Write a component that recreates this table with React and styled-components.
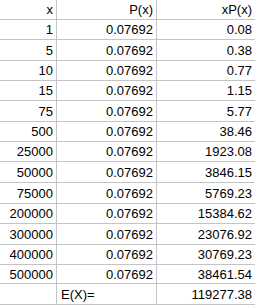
import React from "react";
import styled, { createGlobalStyle } from "styled-components";

const GlobalStyle = createGlobalStyle`
  html, body {
    margin: 0;
    padding: 0;
    background: #ffffff;
  }
  body {
    font-family: "Liberation Sans", Arial, sans-serif;
    color: #000000;
  }
`;

const rows = [
  { x: "1", p: "0.07692", xp: "0.08", h: 20 },
  { x: "5", p: "0.07692", xp: "0.38", h: 21 },
  { x: "10", p: "0.07692", xp: "0.77", h: 20 },
  { x: "15", p: "0.07692", xp: "1.15", h: 20 },
  { x: "75", p: "0.07692", xp: "5.77", h: 21 },
  { x: "500", p: "0.07692", xp: "38.46", h: 20 },
  { x: "25000", p: "0.07692", xp: "1923.08", h: 20 },
  { x: "50000", p: "0.07692", xp: "3846.15", h: 21 },
  { x: "75000", p: "0.07692", xp: "5769.23", h: 21 },
  { x: "200000", p: "0.07692", xp: "15384.62", h: 20 },
  { x: "300000", p: "0.07692", xp: "23076.92", h: 21 },
  { x: "400000", p: "0.07692", xp: "30769.23", h: 20 },
  { x: "500000", p: "0.07692", xp: "38461.54", h: 19 },
];

function App() {
  return (
    <>
      <GlobalStyle />
      <Sheet>
        <Row $h={20}>
          <Cell>x</Cell>
          <Cell>P(x)</Cell>
          <Cell $last>xP(x)</Cell>
        </Row>
        {rows.map((r) => (
          <Row key={r.x} $h={r.h}>
            <Cell>{r.x}</Cell>
            <Cell>{r.p}</Cell>
            <Cell $last>{r.xp}</Cell>
          </Row>
        ))}
        <Row $h={21}>
          <Cell></Cell>
          <Cell $left>E(X)=</Cell>
          <Cell $last>119277.38</Cell>
        </Row>
      </Sheet>
    </>
  );
}

export default App;

const Sheet = styled.div`
  width: 255px;
  display: flex;
  flex-direction: column;
`;

const Row = styled.div`
  display: grid;
  grid-template-columns: 57px 100px 98px;
  height: ${(p) => p.$h}px;
  box-sizing: border-box;
  border-bottom: 1px solid #c4c4c4;
`;

const Cell = styled.div`
  box-sizing: border-box;
  border-right: ${(p) => (p.$last ? "none" : "1px solid #c4c4c4")};
  padding: ${(p) => (p.$left ? "0 0 0 4px" : "0 3px 0 0")};
  text-align: ${(p) => (p.$left ? "left" : "right")};
  font-size: 13px;
  display: flex;
  align-items: center;
  justify-content: ${(p) => (p.$left ? "flex-start" : "flex-end")};
  white-space: nowrap;
`;
